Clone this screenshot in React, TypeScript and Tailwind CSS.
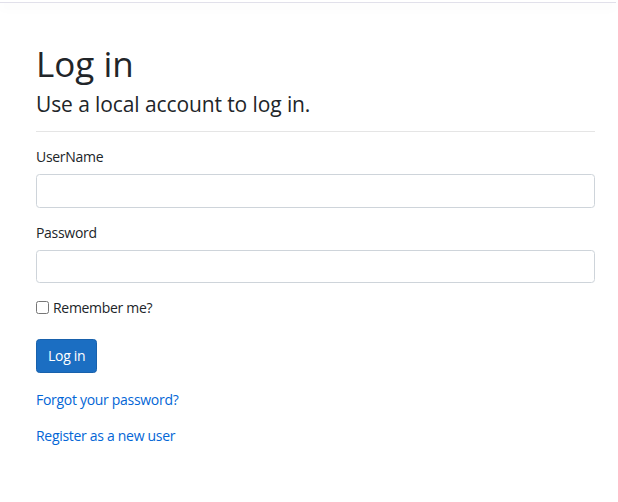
import React from 'react';

const App: React.FC = () => {
    return (
        <div className="min-h-[502px] w-[618px] bg-white text-[14px] leading-[21px] tracking-[-0.3px] text-[#212529]" style={{ fontFamily: '"Open Sans", "Noto Sans", sans-serif' }}>
            <div className="h-[3px] w-[616px] border-b border-[#e1e0ea] shadow-[0_4px_12px_rgba(0,0,0,0.05)]" />

            <main className="w-[559px] ml-[36px] pt-[40px] pb-4">
                <h1 className="text-[35px] leading-[42px] font-medium tracking-normal mb-[7px]">Log in</h1>
                <h4 className="text-[21px] leading-[25px] font-medium tracking-[-0.1px]">Use a local account to log in.</h4>
                <hr className="my-[14px] border-t border-[rgba(0,0,0,0.1)]" />

                <form className="flex flex-col">
                    <div className="mb-[14px]">
                        <label className="block mb-[7px]">UserName</label>
                        <input type="text" className="block w-full h-[33.5px] px-[10.5px] border border-[#ced4da] rounded-[3.5px] bg-white outline-none" />
                    </div>
                    <div className="mb-[14px]">
                        <label className="block mb-[7px]">Password</label>
                        <input type="password" className="block w-full h-[33.5px] px-[10.5px] border border-[#ced4da] rounded-[3.5px] bg-white outline-none" />
                    </div>
                    <div className="mb-[21px] h-[21px] flex items-center">
                        <label className="flex items-center">
                            <input type="checkbox" className="w-[13px] h-[13px] m-0 mr-[4px]" />
                            <span>Remember me?</span>
                        </label>
                    </div>
                    <div className="mb-[16px]">
                        <button type="button" className="h-[33.5px] px-[11px] rounded-[3.5px] border border-[#1861ac] bg-[#1b6ec2] text-white">Log in</button>
                    </div>
                    <p className="mb-[15px]">
                        <a href="#" className="text-[#0366d6]">Forgot your password?</a>
                    </p>
                    <p className="mb-[14px]">
                        <a href="#" className="text-[#0366d6]">Register as a new user</a>
                    </p>
                </form>
            </main>
        </div>
    );
};

export default App;
